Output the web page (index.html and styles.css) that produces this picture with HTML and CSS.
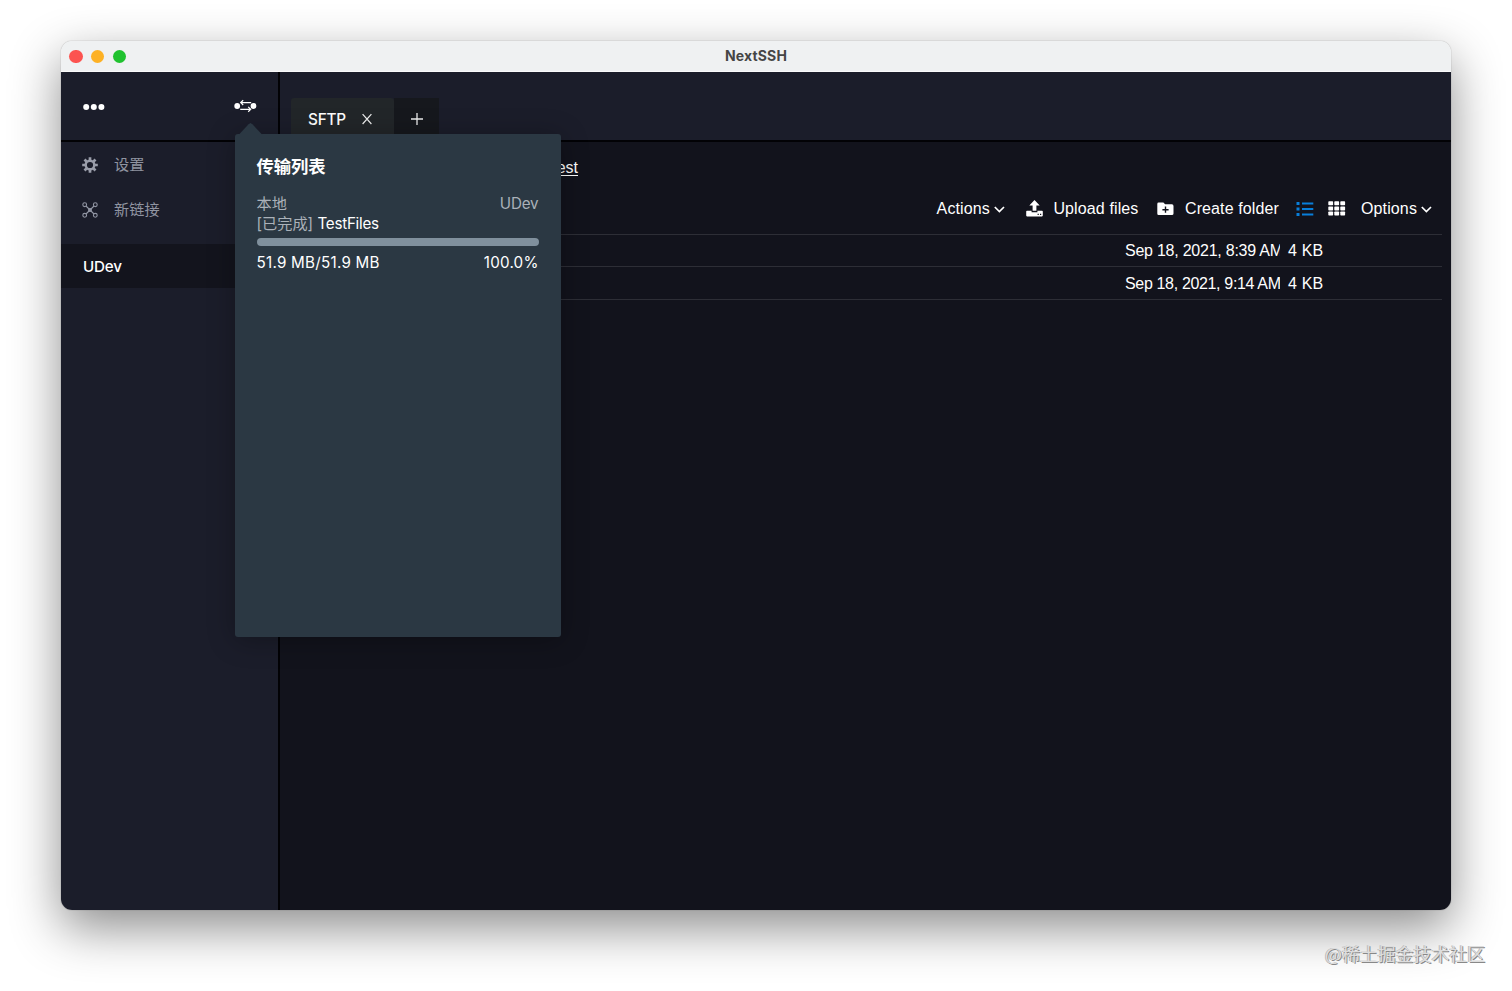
FILE: index.html
```html
<!DOCTYPE html>
<html lang="zh-CN">
<head>
<meta charset="utf-8">
<title>NextSSH</title>
<link rel="stylesheet" href="styles.css">
</head>
<body>
<div class="window">
  <div class="titlebar">
    <div class="lights"><span class="light red"></span><span class="light yellow"></span><span class="light green"></span></div>
    <div class="title">NextSSH</div>
  </div>
  <div class="app">
    <aside class="sidebar">
      <div class="side-head">
        <svg class="dots" width="22" height="8" viewBox="0 0 22 8" fill="#fff"><circle cx="3.2" cy="4" r="3"/><circle cx="10.8" cy="4" r="3"/><circle cx="18.4" cy="4" r="3"/></svg>
        <svg class="transfer" width="24" height="14" viewBox="0 0 24 14" fill="none" stroke="#fff" stroke-width="1.2"><circle cx="3.2" cy="7" r="2.9" fill="#fff" stroke="none"/><circle cx="19.5" cy="7" r="2.9" fill="#fff" stroke="none"/><path d="M17.2 3.6H7M9.2 1.2L6.7 3.6L9.2 6M6.2 10.3H16.5M14.2 7.9L16.7 10.3L14.2 12.7"/></svg>
      </div>
      <nav class="menu">
        <div class="item">
          <svg width="16" height="16" viewBox="0 0 16 16" fill="none" stroke="#9a9da9"><circle cx="8" cy="8" r="4.3" stroke-width="2.4"/><path stroke-width="2.7" d="M8 .2V3M8 13v2.8M.2 8H3M13 8h2.8M2.5 2.5l2 2M11.5 11.5l2 2M2.5 13.5l2-2M11.5 4.5l2-2"/></svg>
          <span class="settings-label">设置</span>
        </div>
        <div class="item">
          <svg width="16" height="16" viewBox="0 0 16 16" fill="none" stroke="#9296a4" stroke-width="1.1"><circle cx="2.7" cy="2.7" r="1.9"/><circle cx="13.3" cy="2.7" r="1.9"/><circle cx="2.7" cy="13.3" r="1.9"/><circle cx="13.3" cy="13.3" r="1.9"/><path d="M4 4l8 8M12 4l-8 8"/><circle cx="8" cy="8" r="1.4" fill="#9296a4"/></svg>
          <span>新链接</span>
        </div>
      </nav>
      <div class="connection">UDev</div>
    </aside>
    <main class="main">
      <div class="tabs">
        <div class="tab"><span>SFTP</span><svg width="10" height="12" viewBox="0 0 10 12" stroke="#eee" stroke-width="1.2"><path d="M.6 1.2l8.8 9.8M9.4 1.2L.6 11"/></svg></div>
        <div class="tab-add"><svg width="12" height="12" viewBox="0 0 12 12" stroke="#eee" stroke-width="1.3"><path d="M6 0v12M0 6h12"/></svg></div>
      </div>
      <div class="files">
        <div class="crumb">/home/udev/Desktop/<span>Test</span></div>
        <div class="toolbar">
          <span class="actions">Actions</span>
          <svg class="chev" width="11" height="7" viewBox="0 0 11 7" fill="none" stroke="#fff" stroke-width="1.7"><path d="M.8 1l4.6 4.5L10 1"/></svg>
          <svg class="upload-icon" width="17" height="17" viewBox="0 0 17 17" fill="#fff"><path d="M8.5 0l5.2 5.6h-3.3v5.2H6.6V5.6H3.3z"/><path fill-rule="evenodd" d="M1 10.8h4.6v1.4h5.8v-1.4H16q.8 0 .8.8v4q0 .8-.8.8H1q-.8 0-.8-.8v-4q0-.8.8-.8zM11.6 13.7v1.2h1.2v-1.2zM14 13.7v1.2h1.2v-1.2z"/></svg>
          <span class="upload">Upload files</span>
          <svg class="folder-icon" width="17" height="14" viewBox="0 0 17 14"><path fill="#fff" d="M1.6.6h4.8l1.7 1.7h6.8q1.6 0 1.6 1.6v7.5q0 1.6-1.6 1.6H1.6Q.3 13 .3 11.4V2Q.3.6 1.6.6z"/><path stroke="#12131c" stroke-width="1.4" d="M8.5 4.6v6.2M5.4 7.7h6.2"/></svg>
          <span class="create">Create folder</span>
          <svg class="list-icon" width="18" height="14" viewBox="0 0 18 14" fill="#087fda"><path d="M.5 0h3v3h-3zM.5 5.5h3v3h-3zM.5 11h3v3h-3zM6 .5h11.3v2H6zM6 6h11.3v2H6zM6 11.5h11.3v2H6z"/></svg>
          <svg class="grid-icon" width="18" height="15" viewBox="0 0 18 15" fill="#fff"><rect x=".3" y=".3" width="4.8" height="4" rx=".7"/><rect x="6.3" y=".3" width="4.8" height="4" rx=".7"/><rect x="12.3" y=".3" width="4.8" height="4" rx=".7"/><rect x=".3" y="5.4" width="4.8" height="4" rx=".7"/><rect x="6.3" y="5.4" width="4.8" height="4" rx=".7"/><rect x="12.3" y="5.4" width="4.8" height="4" rx=".7"/><rect x=".3" y="10.5" width="4.8" height="4" rx=".7"/><rect x="6.3" y="10.5" width="4.8" height="4" rx=".7"/><rect x="12.3" y="10.5" width="4.8" height="4" rx=".7"/></svg>
          <span class="options">Options</span>
          <svg class="chev" width="11" height="7" viewBox="0 0 11 7" fill="none" stroke="#fff" stroke-width="1.7"><path d="M.8 1l4.6 4.5L10 1"/></svg>
        </div>
        <div class="rows">
          <div class="row"><span class="date">Sep 18, 2021, 8:39 AM</span><span class="size">4 KB</span></div>
          <div class="row last"><span class="date wide">Sep 18, 2021, 9:14 AM</span><span class="size">4 KB</span></div>
        </div>
      </div>
    </main>
  </div>
</div>
<section class="popover">
  <h2>传输列表</h2>
  <div class="line muted"><span>本地</span><span class="host">UDev</span></div>
  <div class="line file"><span><span class="muted">[已完成]</span> <span class="name">TestFiles</span></span></div>
  <div class="bar"></div>
  <div class="line total"><span class="amount">51.9 MB/51.9 MB</span><span class="percent">100.0%</span></div>
</section>
<div class="watermark">@稀土掘金技术社区</div>
</body>
</html>
```
FILE: styles.css
```css
* { box-sizing: border-box; }
body {
  margin: 0;
  width: 1512px;
  height: 991px;
  padding: 41px 61px 81px;
  overflow: hidden;
  position: relative;
  background: #fff;
  font-family: Inter, "Noto Sans CJK SC", sans-serif;
  color: #fff;
}
svg { display: block; flex: none; }
.window {
  width: 1390px;
  height: 869px;
  border-radius: 11px;
  overflow: hidden;
  box-shadow: 0 0 1px rgba(0,0,0,.5), 0 18px 50px rgba(0,0,0,.45);
}
.titlebar {
  height: 31px;
  display: grid;
  grid-template-columns: 100px 1fr 100px;
  align-items: center;
  background: #eff1f2;
  border-bottom: 1px solid #fafafa;
}
.lights { display: flex; gap: 8.6px; padding: 1px 0 0 8.4px; }
.light { width: 13.2px; height: 13.2px; border-radius: 50%; }
.red { background: #fc5350; }
.yellow { background: #fdb124; }
.green { background: #20c22f; }
.title { text-align: center; font-size: 14px; font-weight: 700; line-height: 28px; letter-spacing: .15px; color: #454545; }
.app { display: flex; height: 838px; }
.sidebar { width: 219px; border-right: 2px solid #020205; background: #1b1d2a; }
.side-head {
  height: 70px;
  display: flex;
  justify-content: space-between;
  padding: 27px 20px 0 22px;
  border-bottom: 2px solid #020205;
}
.dots { margin-top: 4px; }
.menu { height: 102px; }
.item { height: 44px; padding-left: 21px; display: flex; align-items: center; gap: 16px; font-size: 15.2px; color: #9094a1; }
.item:first-child { height: 46px; }
.item span { white-space: nowrap; position: relative; top: -2px; }
.connection { height: 44px; padding-left: 22px; line-height: 46px; background: #13141d; font-size: 15.2px; font-weight: 500; letter-spacing: -.2px; }
.main { flex: 1; min-width: 0; background: #12131c; }
.tabs { height: 70px; padding: 26px 0 0 11px; display: flex; background: #1b1d2a; border-bottom: 2px solid #020205; }
.tab { width: 103px; padding: 0 22px 0 17px; display: flex; align-items: center; justify-content: space-between; background: #222629; border-radius: 3px 3px 0 0; font-size: 15.3px; font-weight: 500; letter-spacing: -.25px; }
.tab span { padding-top: 1px; }
.tab-add { width: 45px; display: flex; align-items: center; justify-content: center; background: #16181d; }
.files { padding-right: 9px; font-family: "Liberation Sans", Arial, sans-serif; font-size: 16px; }
.crumb { height: 48px; width: 298px; line-height: 51px; text-align: right; white-space: nowrap; }
.crumb span { text-decoration: underline; text-underline-offset: 2px; }
.toolbar { height: 44px; padding: 0 10px 7px 0; display: flex; align-items: center; justify-content: flex-end; white-space: nowrap; letter-spacing: .12px; }
.chev { margin-left: 4px; margin-top: 2px; }
.upload-icon { margin: 0 10.5px 0 21px; }
.folder-icon { margin: 0 10.5px 0 19px; }
.list-icon { margin: 0 14.5px 0 16.5px; }
.grid-icon { margin-right: 15px; }
.rows { border-top: 1px solid #2d2e36; }
.row { height: 32px; display: flex; align-items: center; padding: 1px 0 0 845px; border-bottom: 1px solid #2d2e36; white-space: nowrap; }
.row.last { height: 33px; }
.date { width: 155px; overflow: hidden; margin-right: 8px; letter-spacing: -.24px; }
.date.wide { letter-spacing: -.34px; }
.size { letter-spacing: .15px; }
.popover {
  position: absolute;
  left: 234.5px;
  top: 134px;
  width: 326px;
  height: 502.5px;
  padding: 20px 22px;
  background: #2b3843;
  border-radius: 3px;
  box-shadow: 0 3px 28px rgba(0,0,0,.3);
  font-size: 15.2px;
}
.popover::before {
  content: "";
  position: absolute;
  left: 4px;
  top: -11px;
  width: 24px;
  height: 12px;
  background: #2b3843;
  clip-path: polygon(0 100%, 42% 10%, 50% 0, 58% 10%, 100% 100%);
}
.popover h2 { margin: 0 0 15px; font-size: 17.3px; line-height: 25px; font-weight: 700; }
.line { height: 20px; line-height: 20px; display: flex; justify-content: space-between; white-space: nowrap; }
.file { line-height: 19px; }
.host { letter-spacing: -.15px; }
.name { letter-spacing: -.25px; }
.muted { color: #aab1b9; }
.bar { height: 8px; margin-top: 4px; border-radius: 4px; background: #80909d; }
.total { margin-top: 7px; }
.amount { letter-spacing: .25px; }
.percent { letter-spacing: .2px; }
.watermark {
  position: absolute;
  left: 1325px;
  top: 940px;
  font: 17.9px/26px "Noto Sans CJK SC", sans-serif;
  color: #ddd;
  text-shadow: 1px 1px 0 #888, -1px 0 0 #bbb;
  white-space: nowrap;
}
```
